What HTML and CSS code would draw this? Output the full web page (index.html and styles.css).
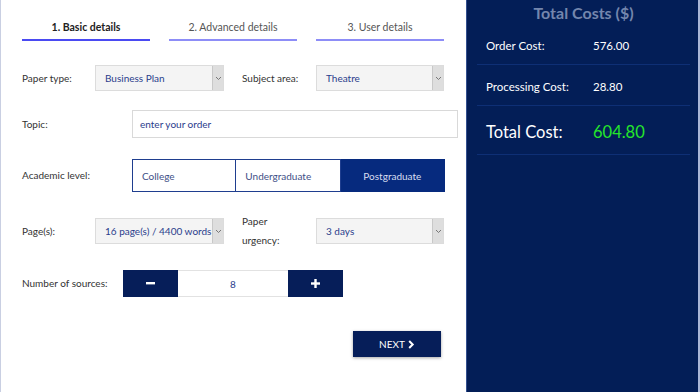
FILE: index.html
```html
<!DOCTYPE html>
<html>
<head>
<meta charset="utf-8">
<link rel="stylesheet" href="styles.css">
</head>
<body>
<div class="page">
  <main class="form">
    <nav class="tabs">
      <div class="tab active">1. Basic details</div>
      <div class="tab">2. Advanced details</div>
      <div class="tab">3. User details</div>
    </nav>

    <div class="row row-two">
      <label class="lbl">Paper type:</label>
      <div class="select"><span class="val">Business Plan</span><span class="arrow"><svg width="7" height="5" viewBox="0 0 7 5"><path d="M1 1l2.5 2.5L6 1" fill="none" stroke="#777" stroke-width="1"/></svg></span></div>
      <label class="lbl">Subject area:</label>
      <div class="select"><span class="val">Theatre</span><span class="arrow"><svg width="7" height="5" viewBox="0 0 7 5"><path d="M1 1l2.5 2.5L6 1" fill="none" stroke="#777" stroke-width="1"/></svg></span></div>
    </div>

    <div class="row row-topic">
      <label class="lbl">Topic:</label>
      <div class="input">enter your order</div>
    </div>

    <div class="row row-level">
      <label class="lbl">Academic level:</label>
      <div class="group">
        <div class="opt">College</div>
        <div class="opt">Undergraduate</div>
        <div class="opt on">Postgraduate</div>
      </div>
    </div>

    <div class="row row-two">
      <label class="lbl">Page(s):</label>
      <div class="select"><span class="val">16 page(s) / 4400 words</span><span class="arrow"><svg width="7" height="5" viewBox="0 0 7 5"><path d="M1 1l2.5 2.5L6 1" fill="none" stroke="#777" stroke-width="1"/></svg></span></div>
      <label class="lbl two-line">Paper<br>urgency:</label>
      <div class="select"><span class="val">3 days</span><span class="arrow"><svg width="7" height="5" viewBox="0 0 7 5"><path d="M1 1l2.5 2.5L6 1" fill="none" stroke="#777" stroke-width="1"/></svg></span></div>
    </div>

    <div class="row row-sources">
      <label class="lbl">Number of sources:</label>
      <div class="stepper">
        <button class="step"><svg width="9" height="3" viewBox="0 0 9 3"><rect width="9" height="2.4" fill="#fff"/></svg></button>
        <div class="count">8</div>
        <button class="step"><svg width="9" height="9" viewBox="0 0 9 9"><rect y="3.3" width="9" height="2.4" fill="#fff"/><rect x="3.3" width="2.4" height="9" fill="#fff"/></svg></button>
      </div>
    </div>

    <div class="actions">
      <button class="next">NEXT <svg width="7" height="9" viewBox="0 0 7 9"><path d="M1.2 1l3.5 3.5L1.2 8" fill="none" stroke="#fff" stroke-width="2"/></svg></button>
    </div>
  </main>

  <aside class="costs">
    <h2 class="costs-title">Total Costs ($)</h2>
    <div class="cost-row"><span class="cost-lbl">Order Cost:</span><span class="cost-val">576.00</span></div>
    <div class="cost-row"><span class="cost-lbl">Processing Cost:</span><span class="cost-val">28.80</span></div>
    <div class="cost-row total"><span class="cost-lbl">Total Cost:</span><span class="cost-val">604.80</span></div>
  </aside>
</div>
</body>
</html>
```

FILE: styles.css
```css
* { box-sizing: border-box; }
html, body { margin: 0; padding: 0; }
body {
  width: 700px;
  height: 392px;
  overflow: hidden;
  font-family: "Lato", "Noto Sans", sans-serif;
  font-size: 10px;
  color: #333;
  background: #fff;
}
.page {
  display: flex;
  height: 392px;
}
.form {
  width: 466px;
  border-left: 1px solid #c9cfe2;
  padding-left: 21px;
  display: flex;
  flex-direction: column;
}
.tabs {
  display: flex;
  gap: 19px;
  padding-top: 20px;
}
.tab {
  width: 128px;
  text-align: center;
  font-size: 10.5px;
  line-height: 14px;
  color: #555;
  padding-bottom: 5px;
  border-bottom: 2px solid #8d8df7;
}
.tab.active {
  color: #222;
  font-weight: 700;
  border-bottom-color: #4a4af2;
}
.row {
  display: flex;
  align-items: center;
}
.lbl {
  color: #333;
  line-height: 13px;
}
.row-two {
  margin-top: 24px;
  height: 26px;
}
.row-two .lbl:nth-child(1) { width: 73px; }
.row-two .lbl:nth-child(3) { width: 74px; margin-left: 18px; }
.row-two .select:nth-child(2) { width: 129px; }
.row-two .select:nth-child(4) { width: 128px; }
.row-two + .row-topic { margin-top: 19px; }
.select {
  height: 26px;
  display: flex;
  border: 1px solid #dcdcdc;
  background: #f4f4f4;
}
.select .val {
  flex: 1;
  padding-left: 9px;
  display: flex;
  align-items: center;
  color: #2a3d8c;
  white-space: nowrap;
  overflow: hidden;
}
.select .arrow {
  width: 11px;
  background: #dedede;
  border-left: 1px solid #c8c8c8;
  display: flex;
  align-items: center;
  justify-content: center;
}
.row-topic { height: 28px; }
.row-topic .lbl { width: 110px; }
.input {
  width: 326px;
  height: 28px;
  border: 1px solid #d9d9d9;
  padding-left: 7px;
  display: flex;
  align-items: center;
  color: #2a3d8c;
}
.row-level {
  margin-top: 21px;
  height: 33px;
}
.row-level .lbl { width: 110px; }
.group {
  display: flex;
  width: 313px;
  height: 33px;
}
.opt {
  width: 104.5px;
  border: 1px solid #1f3e8f;
  display: flex;
  align-items: center;
  padding-left: 9px;
  color: #3e4f86;
}
.opt + .opt { border-left: none; }
.opt.on {
  background: #062a7e;
  border-color: #062a7e;
  color: #d8def0;
  justify-content: center;
  padding-left: 0;
}
.row-level + .row-two { margin-top: 26px; }
.two-line { line-height: 19px; }
.row-sources {
  margin-top: 26px;
  height: 27px;
}
.row-sources .lbl { width: 101px; }
.stepper {
  display: flex;
  height: 27px;
}
.step {
  width: 55px;
  height: 27px;
  border: none;
  padding: 0;
  background: #061e59;
  display: flex;
  align-items: center;
  justify-content: center;
}
.count {
  width: 110px;
  border-top: 1px solid #e2e2e2;
  border-bottom: 1px solid #e2e2e2;
  display: flex;
  align-items: center;
  justify-content: center;
  color: #2a3d8c;
}
.actions {
  margin-top: 34px;
  padding-left: 331px;
}
.next {
  width: 88px;
  height: 26px;
  border: none;
  background: #061e59;
  color: #fff;
  font-family: inherit;
  font-size: 10px;
  display: flex;
  align-items: center;
  justify-content: center;
  gap: 3px;
  box-shadow: 0 1px 3px rgba(0,0,0,0.35);
}
.costs {
  width: 234px;
  background: #031e57;
  border-left: 1px solid #33508f;
  border-right: 2px solid #a9b6d6;
  padding: 0 8px 0 10px;
}
.costs-title {
  margin: 0;
  padding-top: 2px;
  height: 24px;
  text-align: center;
  font-size: 16px;
  line-height: 22px;
  font-weight: 700;
  color: #7486ad;
}
.cost-row {
  display: flex;
  align-items: center;
  height: 41px;
  border-bottom: 1px solid #0e2f75;
  padding-left: 9px;
  padding-top: 3px;
  color: #fff;
  font-size: 11.5px;
}
.cost-lbl { width: 107px; }
.cost-row.total {
  height: 49px;
  font-size: 16.5px;
}
.cost-row.total .cost-val { color: #25e62b; }
```
